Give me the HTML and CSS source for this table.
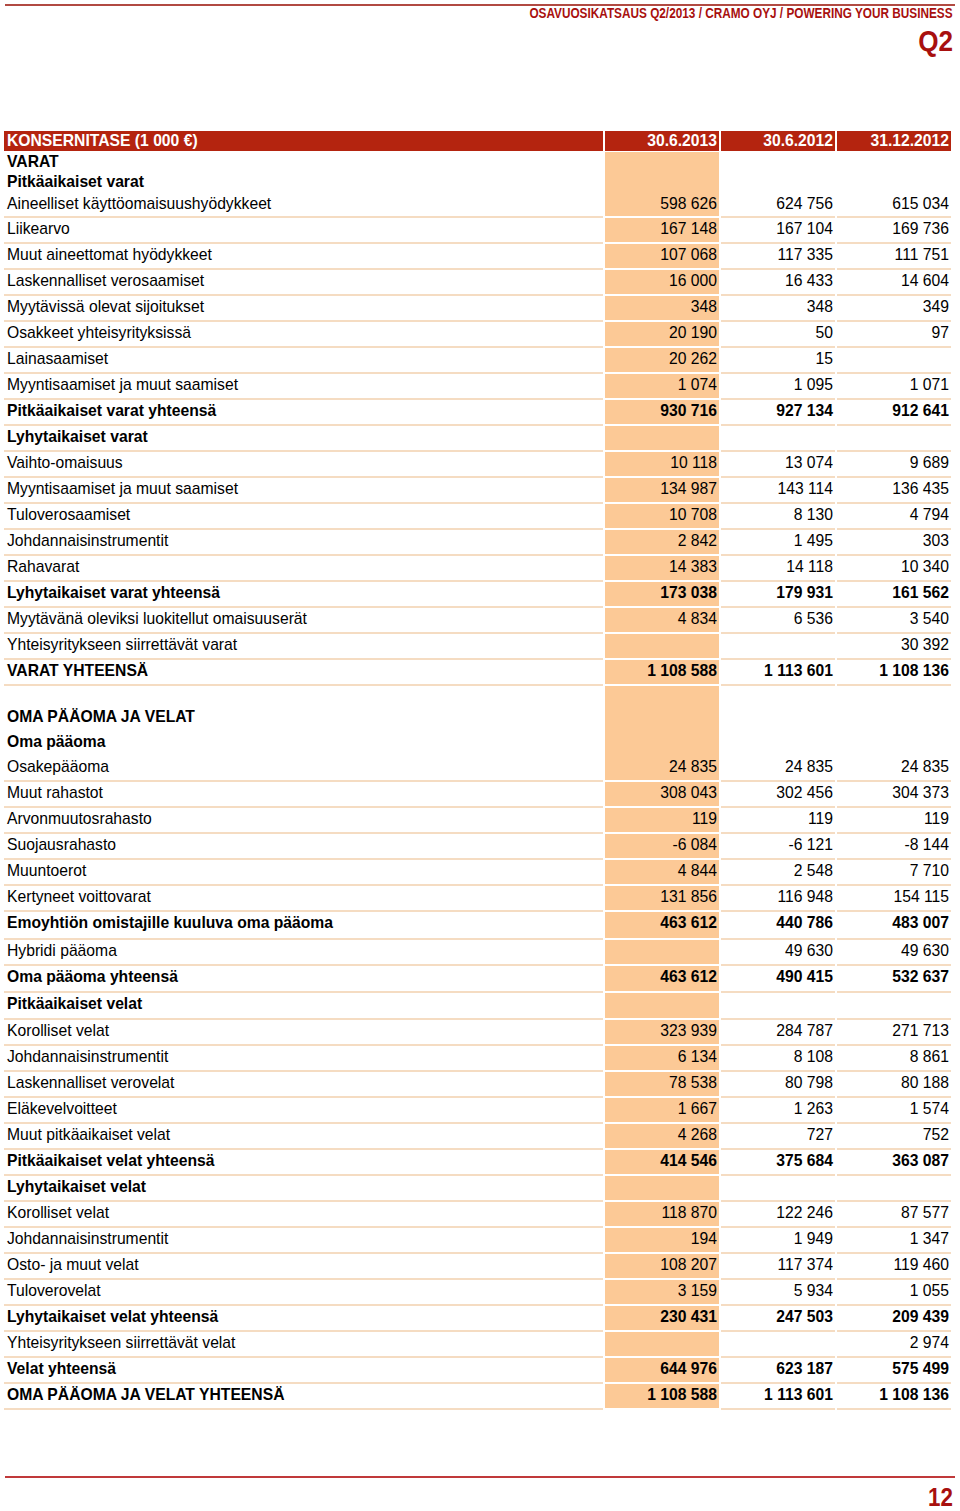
FILE: index.html
```html
<!DOCTYPE html>
<html lang="fi">
<head>
<meta charset="utf-8">
<title>Konsernitase</title>
<link rel="stylesheet" href="styles.css">
</head>
<body>
<div class="page">
  <div class="topline"></div>
  <div class="doc-title"><span class="narrow">OSAVUOSIKATSAUS Q2/2013 / CRAMO OYJ / POWERING YOUR BUSINESS</span></div>
  <div class="quarter"><span class="narrow">Q2</span></div>

  <div class="sheet">
    <div class="row row--head"><div class="cell lab">KONSERNITASE (1 000 €)</div><div class="cell val">30.6.2013</div><div class="cell val">30.6.2012</div><div class="cell val">31.12.2012</div></div>

    <div class="row row--plain row--bold"><div class="cell lab">VARAT</div><div class="cell val cur"></div><div class="cell val"></div><div class="cell val"></div></div>
    <div class="row row--plain row--bold"><div class="cell lab">Pitkäaikaiset varat</div><div class="cell val cur"></div><div class="cell val"></div><div class="cell val"></div></div>
    <div class="row row--first"><div class="cell lab">Aineelliset käyttöomaisuushyödykkeet</div><div class="cell val cur">598 626</div><div class="cell val">624 756</div><div class="cell val">615 034</div></div>
    <div class="row"><div class="cell lab">Liikearvo</div><div class="cell val cur">167 148</div><div class="cell val">167 104</div><div class="cell val">169 736</div></div>
    <div class="row"><div class="cell lab">Muut aineettomat hyödykkeet</div><div class="cell val cur">107 068</div><div class="cell val">117 335</div><div class="cell val">111 751</div></div>
    <div class="row"><div class="cell lab">Laskennalliset verosaamiset</div><div class="cell val cur">16 000</div><div class="cell val">16 433</div><div class="cell val">14 604</div></div>
    <div class="row"><div class="cell lab">Myytävissä olevat sijoitukset</div><div class="cell val cur">348</div><div class="cell val">348</div><div class="cell val">349</div></div>
    <div class="row"><div class="cell lab">Osakkeet yhteisyrityksissä</div><div class="cell val cur">20 190</div><div class="cell val">50</div><div class="cell val">97</div></div>
    <div class="row"><div class="cell lab">Lainasaamiset</div><div class="cell val cur">20 262</div><div class="cell val">15</div><div class="cell val"></div></div>
    <div class="row"><div class="cell lab">Myyntisaamiset ja muut saamiset</div><div class="cell val cur">1 074</div><div class="cell val">1 095</div><div class="cell val">1 071</div></div>
    <div class="row row--bold"><div class="cell lab">Pitkäaikaiset varat yhteensä</div><div class="cell val cur">930 716</div><div class="cell val">927 134</div><div class="cell val">912 641</div></div>
    <div class="row row--bold"><div class="cell lab">Lyhytaikaiset varat</div><div class="cell val cur"></div><div class="cell val"></div><div class="cell val"></div></div>
    <div class="row"><div class="cell lab">Vaihto-omaisuus</div><div class="cell val cur">10 118</div><div class="cell val">13 074</div><div class="cell val">9 689</div></div>
    <div class="row"><div class="cell lab">Myyntisaamiset ja muut saamiset</div><div class="cell val cur">134 987</div><div class="cell val">143 114</div><div class="cell val">136 435</div></div>
    <div class="row"><div class="cell lab">Tuloverosaamiset</div><div class="cell val cur">10 708</div><div class="cell val">8 130</div><div class="cell val">4 794</div></div>
    <div class="row"><div class="cell lab">Johdannaisinstrumentit</div><div class="cell val cur">2 842</div><div class="cell val">1 495</div><div class="cell val">303</div></div>
    <div class="row"><div class="cell lab">Rahavarat</div><div class="cell val cur">14 383</div><div class="cell val">14 118</div><div class="cell val">10 340</div></div>
    <div class="row row--bold"><div class="cell lab">Lyhytaikaiset varat yhteensä</div><div class="cell val cur">173 038</div><div class="cell val">179 931</div><div class="cell val">161 562</div></div>
    <div class="row"><div class="cell lab">Myytävänä oleviksi luokitellut omaisuuserät</div><div class="cell val cur">4 834</div><div class="cell val">6 536</div><div class="cell val">3 540</div></div>
    <div class="row"><div class="cell lab">Yhteisyritykseen siirrettävät varat</div><div class="cell val cur"></div><div class="cell val"></div><div class="cell val">30 392</div></div>
    <div class="row row--bold"><div class="cell lab">VARAT YHTEENSÄ</div><div class="cell val cur">1 108 588</div><div class="cell val">1 113 601</div><div class="cell val">1 108 136</div></div>

    <div class="row row--plain row--spacer"><div class="cell lab"></div><div class="cell val cur"></div><div class="cell val"></div><div class="cell val"></div></div>
    <div class="row row--plain row--bold row--sec"><div class="cell lab">OMA PÄÄOMA JA VELAT</div><div class="cell val cur"></div><div class="cell val"></div><div class="cell val"></div></div>
    <div class="row row--plain row--bold row--sub"><div class="cell lab">Oma pääoma</div><div class="cell val cur"></div><div class="cell val"></div><div class="cell val"></div></div>
    <div class="row"><div class="cell lab">Osakepääoma</div><div class="cell val cur">24 835</div><div class="cell val">24 835</div><div class="cell val">24 835</div></div>
    <div class="row"><div class="cell lab">Muut rahastot</div><div class="cell val cur">308 043</div><div class="cell val">302 456</div><div class="cell val">304 373</div></div>
    <div class="row"><div class="cell lab">Arvonmuutosrahasto</div><div class="cell val cur">119</div><div class="cell val">119</div><div class="cell val">119</div></div>
    <div class="row"><div class="cell lab">Suojausrahasto</div><div class="cell val cur">-6 084</div><div class="cell val">-6 121</div><div class="cell val">-8 144</div></div>
    <div class="row"><div class="cell lab">Muuntoerot</div><div class="cell val cur">4 844</div><div class="cell val">2 548</div><div class="cell val">7 710</div></div>
    <div class="row"><div class="cell lab">Kertyneet voittovarat</div><div class="cell val cur">131 856</div><div class="cell val">116 948</div><div class="cell val">154 115</div></div>
    <div class="row row--bold row--h28"><div class="cell lab">Emoyhtiön omistajille kuuluva oma pääoma</div><div class="cell val cur">463 612</div><div class="cell val">440 786</div><div class="cell val">483 007</div></div>
    <div class="row"><div class="cell lab">Hybridi pääoma</div><div class="cell val cur"></div><div class="cell val">49 630</div><div class="cell val">49 630</div></div>
    <div class="row row--bold row--h27"><div class="cell lab">Oma pääoma yhteensä</div><div class="cell val cur">463 612</div><div class="cell val">490 415</div><div class="cell val">532 637</div></div>
    <div class="row row--bold row--h27"><div class="cell lab">Pitkäaikaiset velat</div><div class="cell val cur"></div><div class="cell val"></div><div class="cell val"></div></div>
    <div class="row"><div class="cell lab">Korolliset velat</div><div class="cell val cur">323 939</div><div class="cell val">284 787</div><div class="cell val">271 713</div></div>
    <div class="row"><div class="cell lab">Johdannaisinstrumentit</div><div class="cell val cur">6 134</div><div class="cell val">8 108</div><div class="cell val">8 861</div></div>
    <div class="row"><div class="cell lab">Laskennalliset verovelat</div><div class="cell val cur">78 538</div><div class="cell val">80 798</div><div class="cell val">80 188</div></div>
    <div class="row"><div class="cell lab">Eläkevelvoitteet</div><div class="cell val cur">1 667</div><div class="cell val">1 263</div><div class="cell val">1 574</div></div>
    <div class="row"><div class="cell lab">Muut pitkäaikaiset velat</div><div class="cell val cur">4 268</div><div class="cell val">727</div><div class="cell val">752</div></div>
    <div class="row row--bold"><div class="cell lab">Pitkäaikaiset velat yhteensä</div><div class="cell val cur">414 546</div><div class="cell val">375 684</div><div class="cell val">363 087</div></div>
    <div class="row row--bold"><div class="cell lab">Lyhytaikaiset velat</div><div class="cell val cur"></div><div class="cell val"></div><div class="cell val"></div></div>
    <div class="row"><div class="cell lab">Korolliset velat</div><div class="cell val cur">118 870</div><div class="cell val">122 246</div><div class="cell val">87 577</div></div>
    <div class="row"><div class="cell lab">Johdannaisinstrumentit</div><div class="cell val cur">194</div><div class="cell val">1 949</div><div class="cell val">1 347</div></div>
    <div class="row"><div class="cell lab">Osto- ja muut velat</div><div class="cell val cur">108 207</div><div class="cell val">117 374</div><div class="cell val">119 460</div></div>
    <div class="row"><div class="cell lab">Tuloverovelat</div><div class="cell val cur">3 159</div><div class="cell val">5 934</div><div class="cell val">1 055</div></div>
    <div class="row row--bold"><div class="cell lab">Lyhytaikaiset velat yhteensä</div><div class="cell val cur">230 431</div><div class="cell val">247 503</div><div class="cell val">209 439</div></div>
    <div class="row"><div class="cell lab">Yhteisyritykseen siirrettävät velat</div><div class="cell val cur"></div><div class="cell val"></div><div class="cell val">2 974</div></div>
    <div class="row row--bold"><div class="cell lab">Velat yhteensä</div><div class="cell val cur">644 976</div><div class="cell val">623 187</div><div class="cell val">575 499</div></div>
    <div class="row row--bold"><div class="cell lab">OMA PÄÄOMA JA VELAT YHTEENSÄ</div><div class="cell val cur">1 108 588</div><div class="cell val">1 113 601</div><div class="cell val">1 108 136</div></div>
  </div>

  <div class="bottomline"></div>
  <div class="pageno"><span class="narrow">12</span></div>
</div>
</body>
</html>
```

FILE: styles.css
```css
* { box-sizing: border-box; }

html, body {
  margin: 0;
  padding: 0;
  background: #ffffff;
}

.page {
  width: 960px;
  height: 1511px;
  padding-top: 4px;
  font-family: "Liberation Sans", Arial, sans-serif;
  color: #000;
}

.topline {
  margin-left: 5px;
  width: 950px;
  height: 2px;
  background: #b14a42;
}

.narrow {
  display: inline-block;
  transform-origin: right center;
}

.doc-title {
  padding-right: 7px;
  text-align: right;
  font-weight: bold;
  font-size: 14px;
  line-height: 14px;
  color: #a8100e;
  white-space: nowrap;
}
.doc-title .narrow { transform: scaleX(0.842); }

.quarter {
  margin-top: 6px;
  padding-right: 7px;
  text-align: right;
  font-weight: bold;
  font-size: 30px;
  line-height: 30px;
  color: #a8100e;
}
.quarter .narrow { transform: scaleX(0.87); }

.sheet {
  margin-top: 75px;
  margin-left: 4px;
  font-size: 15.7px;
}

.row {
  display: grid;
  grid-template-columns: 599px 114px 114px 114px;
  column-gap: 2px;
}

.cell {
  padding: 2px 2px 4px 2px;
  line-height: 18px;
  border-bottom: 2px solid #f5dcc2;
  white-space: nowrap;
}

.cell.lab { padding-left: 3px; }
.cell.val { text-align: right; }

.cell.cur {
  background: #fcc996;
  border-bottom-color: #ffffff;
}

.row--bold .cell { font-weight: bold; }

.row--head {
  margin-bottom: 1px;
}
.row--head .cell {
  height: 20px;
  padding-top: 1px;
  padding-bottom: 1px;
  border-bottom: 0;
  background: #b4240f;
  color: #ffffff;
  font-weight: bold;
}

.row--plain .cell {
  height: 20px;
  padding-top: 1px;
  padding-bottom: 0;
  border-bottom: 0;
}

.row--first .cell {
  padding-top: 3px;
  padding-bottom: 3px;
}

.row--spacer .cell { height: 21px; }
.row--sec .cell { height: 25px; }
.row--sub .cell { height: 24px; }

.row--h28 .cell { padding-bottom: 6px; }
.row--h27 .cell { padding-bottom: 5px; }

.bottomline {
  margin-top: 66px;
  margin-left: 5px;
  width: 950px;
  height: 2px;
  background: #c0393a;
}

.pageno {
  margin-top: 6px;
  padding-right: 7px;
  text-align: right;
  font-weight: bold;
  font-size: 26px;
  line-height: 26px;
  color: #a8100e;
}
.pageno .narrow { transform: scaleX(0.86); }
```
